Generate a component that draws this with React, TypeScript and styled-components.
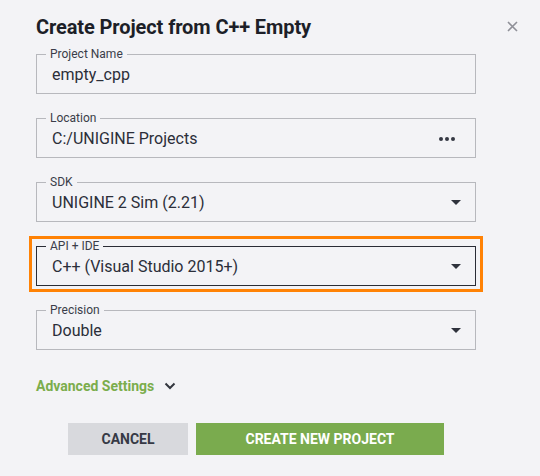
import { FunctionComponent, ReactNode } from "react";
import styled, { createGlobalStyle } from "styled-components";

const GlobalStyle = createGlobalStyle`
    html, body {
        margin: 0;
        padding: 0;
        background: #f3f3f6;
    }
    body {
        font-family: Roboto, "Liberation Sans", Arial, sans-serif;
        color: #2b2e39;
    }
`;

const Dialog = styled.div`
    width: 540px;
    height: 476px;
    box-sizing: border-box;
    padding: 15px 0 0 36px;
    background: #f3f3f6;
`;

const Header = styled.div`
    width: 482px;
    display: flex;
    align-items: center;
    justify-content: space-between;
`;

const Title = styled.h1`
    margin: 0;
    font-size: 20px;
    line-height: 24px;
    font-weight: 700;
    color: #1d1f28;
    letter-spacing: -0.1px;
`;

const CloseButton = styled.button`
    border: none;
    background: none;
    padding: 0;
    width: 12px;
    height: 12px;
    display: flex;
    align-items: center;
    justify-content: center;
    cursor: pointer;
    margin-top: -2px;
`;

const Fields = styled.div`
    width: 440px;
    margin-top: 8px;
    display: flex;
    flex-direction: column;
    gap: 17px;
`;

const Fieldset = styled.fieldset<{ $active?: boolean }>`
    margin: 0;
    padding: 0 14px 0 15px;
    min-width: 0;
    border: 1px solid ${({ $active }) => ($active ? "#2a2c35" : "#b7b8bd")};
    border-radius: 0;
`;

const Legend = styled.legend`
    margin-left: -6px;
    padding: 0 4px;
    font-size: 12px;
    line-height: 14px;
    color: #3a3d49;
`;

const Row = styled.div`
    height: 27px;
    padding-bottom: 5px;
    display: flex;
    align-items: center;
    justify-content: space-between;
    font-size: 16px;
    color: #2b2e39;
`;

const Highlight = styled.div`
    margin: -3px -7px -6px -7px;
    padding: 0 4px 3px 4px;
    border: 3px solid #ff8205;
`;

const Dots = styled.div`
    display: flex;
    gap: 2px;
    margin-right: 6px;
    span {
        width: 4px;
        height: 4px;
        border-radius: 50%;
        background: #353843;
    }
`;

const Caret = styled.span`
    width: 0;
    height: 0;
    border-left: 5px solid transparent;
    border-right: 5px solid transparent;
    border-top: 5px solid #2f323c;
`;

const Advanced = styled.button`
    margin-top: 26px;
    padding: 0;
    border: none;
    background: none;
    display: flex;
    align-items: center;
    gap: 10px;
    font-family: inherit;
    font-size: 14px;
    line-height: 20px;
    font-weight: 700;
    color: #7bad4c;
    cursor: pointer;
`;

const Actions = styled.div`
    margin: 27px 0 0 32px;
    display: flex;
    gap: 8px;
`;

const Button = styled.button<{ $primary?: boolean }>`
    height: 32px;
    width: ${({ $primary }) => ($primary ? "248px" : "120px")};
    border: none;
    border-radius: 0;
    background: ${({ $primary }) => ($primary ? "#7aab4e" : "#d8d9dd")};
    color: ${({ $primary }) => ($primary ? "#ffffff" : "#363945")};
    font-family: inherit;
    font-size: 14px;
    font-weight: 700;
    text-transform: uppercase;
    cursor: pointer;
`;

const Field: FunctionComponent<{ label: string; value: string; active?: boolean; children?: ReactNode }> = ({
    label,
    value,
    active,
    children,
}) => (
    <Fieldset $active={active}>
        <Legend>{label}</Legend>
        <Row>
            <span>{value}</span>
            {children}
        </Row>
    </Fieldset>
);

export default function App() {
    return (
        <>
            <GlobalStyle />
            <Dialog>
                <Header>
                    <Title>Create Project from C++ Empty</Title>
                    <CloseButton aria-label="Close">
                        <svg width="11" height="11" viewBox="0 0 11 11">
                            <path d="M1 1L10 10M10 1L1 10" stroke="#8f9098" strokeWidth="1.6" />
                        </svg>
                    </CloseButton>
                </Header>

                <Fields>
                    <Field label="Project Name" value="empty_cpp" />
                    <Field label="Location" value="C:/UNIGINE Projects">
                        <Dots>
                            <span />
                            <span />
                            <span />
                        </Dots>
                    </Field>
                    <Field label="SDK" value="UNIGINE 2 Sim (2.21)">
                        <Caret />
                    </Field>
                    <Highlight>
                        <Field label="API + IDE" value="C++ (Visual Studio 2015+)" active>
                            <Caret />
                        </Field>
                    </Highlight>
                    <Field label="Precision" value="Double">
                        <Caret />
                    </Field>
                </Fields>

                <Advanced>
                    Advanced Settings
                    <svg width="12" height="8" viewBox="0 0 12 8">
                        <path d="M1.5 1.5L6 6L10.5 1.5" fill="none" stroke="#33363f" strokeWidth="2" />
                    </svg>
                </Advanced>

                <Actions>
                    <Button>Cancel</Button>
                    <Button $primary>Create New Project</Button>
                </Actions>
            </Dialog>
        </>
    );
}
